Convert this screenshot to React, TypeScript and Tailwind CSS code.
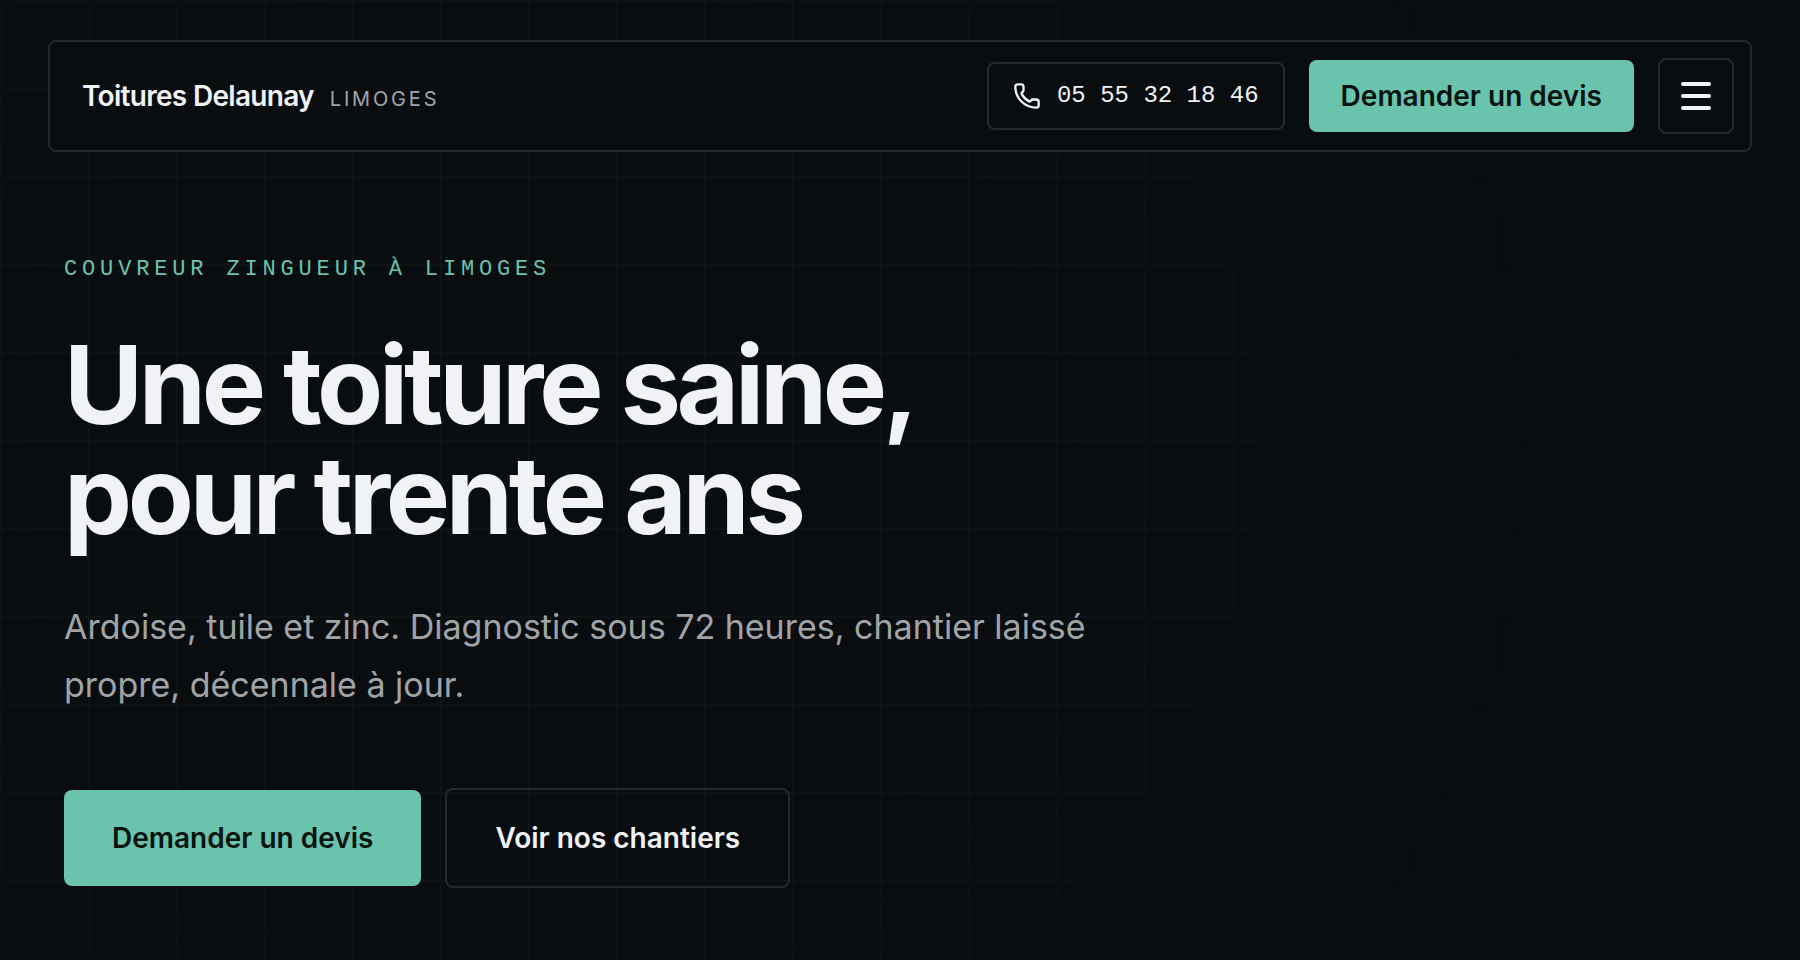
import React from 'react';

import { Phone } from 'lucide-react';

const phone = '05 55 32 18 46';

function Header() {
  return (
    <header className="flex items-center justify-between gap-6 rounded-lg border-2 border-[#25292b] bg-[#0a0d10] py-4 pr-4 pl-8">
      <a href="#top" className="flex items-baseline gap-4">
        <span className="text-[28px] leading-9 font-semibold tracking-tight text-[#f0f2f5]">Toitures Delaunay</span>
        <span className="text-xl tracking-[0.14em] text-[#a1a4a7]">LIMOGES</span>
      </a>

      <div className="flex items-center gap-6">
        <a
          href="tel:0555321846"
          className="flex h-[68px] items-center gap-4 rounded-lg border-2 border-[#25292b] px-6 font-['Liberation_Mono',monospace] text-2xl whitespace-nowrap text-[#f0f2f5]"
        >
          <Phone className="size-7" strokeWidth={2} />
          {phone}
        </a>
        <a
          href="#devis"
          className="flex h-[72px] items-center rounded-lg bg-[#69c3ad] px-8 text-[28px] font-semibold whitespace-nowrap text-[#06140f]"
        >
          Demander un devis
        </a>
        <button
          type="button"
          aria-label="Menu"
          className="flex size-[76px] flex-col items-center justify-center gap-2 rounded-lg border-2 border-[#25292b]"
        >
          <span className="h-1 w-[30px] rounded-xs bg-[#f0f2f5]" />
          <span className="h-1 w-[30px] rounded-xs bg-[#f0f2f5]" />
          <span className="h-1 w-[30px] rounded-xs bg-[#f0f2f5]" />
        </button>
      </div>
    </header>
  );
}

function Hero() {
  return (
    <section className="px-4 pt-[100px]">
      <p className="font-['Liberation_Mono',monospace] text-[22px] leading-9 tracking-[0.22em] text-[#69c3ad]">
        COUVREUR ZINGUEUR À LIMOGES
      </p>
      <h1 className="mt-[42px] text-[108px] leading-[110px] font-bold tracking-[-0.04em] text-[#f0f2f5]">
        Une toiture saine,
        <br />
        pour trente ans
      </h1>
      <p className="mt-12 max-w-[1088px] text-[34px] leading-[58px] text-[#a1a4a7]">
        Ardoise, tuile et zinc. Diagnostic sous 72 heures, chantier laissé propre, décennale à jour.
      </p>
      <div className="mt-[74px] flex flex-wrap items-center gap-6 text-[28px] font-semibold">
        <a href="#devis" className="flex h-24 items-center rounded-lg bg-[#69c3ad] px-12 text-[#06140f]">
          Demander un devis
        </a>
        <a
          href="#chantiers"
          className="flex h-[100px] items-center rounded-lg border-2 border-[#25292b] px-12 text-[#f0f2f5]"
        >
          Voir nos chantiers
        </a>
      </div>
    </section>
  );
}

export default function App() {
  return (
    <div id="top" className="relative min-h-screen bg-[#090d10] font-[Inter,sans-serif]">
      {/* Faint square grid, fading out to the right */}
      <div className="absolute inset-0 bg-[linear-gradient(to_right,#0e1316_2px,transparent_2px),linear-gradient(to_bottom,#0e1316_2px,transparent_2px)] mask-[radial-gradient(55%_94%_at_30%_46%,black_45%,transparent)] bg-size-[88px_88px]" />
      <div className="relative px-12 pt-10 pb-16">
        <Header />
        <Hero />
      </div>
    </div>
  );
}
